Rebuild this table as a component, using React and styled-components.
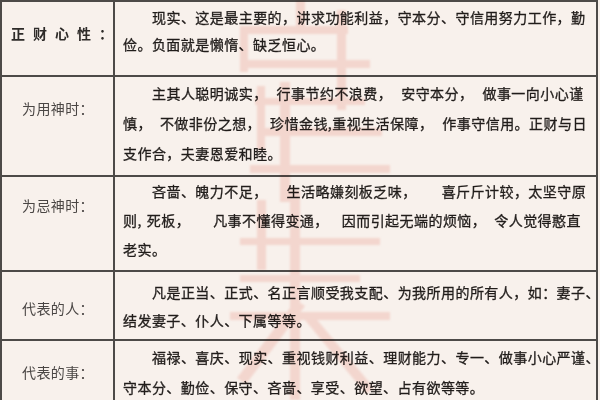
import React from "react";
import styled, { createGlobalStyle } from "styled-components";

const Global = createGlobalStyle`
  html, body { margin: 0; padding: 0; background: #f8f1ec; }
  body { width: 600px; height: 400px; overflow: hidden; }
`;

const Page = styled.div`
  position: relative;
  width: 600px;
  height: 400px;
  overflow: hidden;
  background: #f8f1ec;
  font-family: "Noto Sans CJK SC", "Noto Sans", sans-serif;
`;

const Table = styled.div`
  width: 598px;
  box-sizing: border-box;
  border: 2px solid #4d4a48;
  border-bottom: none;
`;

const Row = styled.div`
  display: grid;
  grid-template-columns: 113px 1fr;
  height: ${(p) => p.$h}px;
  border-bottom: 2px solid #4d4a48;
`;

const Label = styled.div`
  box-sizing: border-box;
  border-right: 2px solid #4d4a48;
  padding: ${(p) => p.$top}px 0 0 ${(p) => p.$left ?? 20}px;
  font-size: 14px;
  line-height: 28px;
  color: ${(p) => (p.$strong ? "#2e2b29" : "#4a4644")};
  font-weight: ${(p) => (p.$strong ? 700 : 400)};
  letter-spacing: ${(p) => p.$spacing ?? 0.4}px;
  white-space: pre;
`;

const Content = styled.div`
  padding: ${(p) => p.$top}px 0 0 8px;
  font-size: 14px;
  line-height: ${(p) => p.$lh}px;
  letter-spacing: 0.45px;
  color: #211d1b;
  -webkit-text-stroke: 0.3px #211d1b;
`;

const Line = styled.div`
  white-space: pre;
  padding-left: ${(p) => (p.$indent ? 29 : 0)}px;
`;

const Gap = styled.span`
  display: inline-block;
  width: ${(p) => p.$w}px;
`;

const Watermark = styled.svg`
  position: absolute;
  left: 0;
  top: 0;
  pointer-events: none;
  mix-blend-mode: multiply;
  filter: blur(1.2px);
`;

const rows = [
  {
    h: 73,
    label: "正财心性：",
    strong: true,
    labelTop: 17,
    labelLeft: 9,
    spacing: 8,
    top: 2,
    lh: 27,
    lines: [
      ["现实、这是最主要的，讲求功能利益，守本分、守信用努力工作，勤"],
      ["俭。负面就是懒惰、缺乏恒心。"],
    ],
  },
  {
    h: 98,
    label: "为用神时：",
    labelTop: 17,
    top: 1,
    lh: 30,
    lines: [
      ["主其人聪明诚实，", 9, "行事节约不浪费，", 9, "安守本分，", 9, "做事一向小心谨"],
      ["慎，", 8, "不做非份之想，", 9, "珍惜金钱,重视生活保障，", 9, "作事守信用。正财与日"],
      ["支作合，夫妻恩爱和睦。"],
    ],
  },
  {
    h: 93,
    label: "为忌神时：",
    labelTop: 14,
    top: 0,
    lh: 29,
    lines: [
      ["吝啬、魄力不足，", 19, "生活略嫌刻板乏味，", 25, "喜斤斤计较，太坚守原"],
      ["则,", 5, "死板，", 23, "凡事不懂得变通，", 13, "因而引起无端的烦恼，", 8, "令人觉得憨直"],
      ["老实。"],
    ],
  },
  {
    h: 67,
    label: "代表的人：",
    labelTop: 22,
    top: 6,
    lh: 28,
    lines: [
      ["凡是正当、正式、名正言顺受我支配、为我所用的所有人，如：妻子、"],
      ["结发妻子、仆人、下属等等。"],
    ],
  },
  {
    h: 80,
    label: "代表的事：",
    labelTop: 17,
    top: 1,
    lh: 30,
    lines: [
      ["福禄、喜庆、现实、重视钱财利益、理财能力、专一、做事小心严谨、"],
      ["守本分、勤俭、保守、吝啬、享受、欲望、占有欲等等。"],
    ],
  },
];

const strokes = [
  [240, 26, 108, 8],
  [240, 26, 8, 46],
  [240, 60, 130, 8],
  [337, 10, 9, 100],
  [296, 0, 9, 28],
  [257, 86, 8, 64],
  [280, 82, 10, 120],
  [255, 98, 110, 7],
  [262, 128, 120, 8],
  [250, 165, 140, 8],
  [240, 238, 140, 7],
  [257, 200, 9, 70],
  [290, 190, 10, 150],
  [240, 275, 120, 7],
  [230, 312, 160, 8],
  [290, 330, 10, 70],
];

export default function App() {
  return (
    <Page>
      <Global />
      <Table>
        {rows.map((r, i) => (
          <Row key={i} $h={r.h}>
            <Label
              $top={r.labelTop}
              $left={r.labelLeft}
              $strong={r.strong}
              $spacing={r.spacing}
            >
              {r.label}
            </Label>
            <Content $top={r.top} $lh={r.lh}>
              {r.lines.map((segs, j) => (
                <Line key={j} $indent={j === 0}>
                  {segs.map((s, k) =>
                    typeof s === "number" ? <Gap key={k} $w={s} /> : <span key={k}>{s}</span>
                  )}
                </Line>
              ))}
            </Content>
          </Row>
        ))}
      </Table>
      <Watermark width="600" height="400" viewBox="0 0 600 400">
        <g fill="#eea79d" opacity="0.32">
          {strokes.map(([x, y, w, h], i) => (
            <rect key={i} x={x} y={y} width={w} height={h} />
          ))}
          <polygon points="296,300 305,306 246,384 237,378" />
          <polygon points="305,320 313,315 374,388 366,394" />
        </g>
      </Watermark>
    </Page>
  );
}
